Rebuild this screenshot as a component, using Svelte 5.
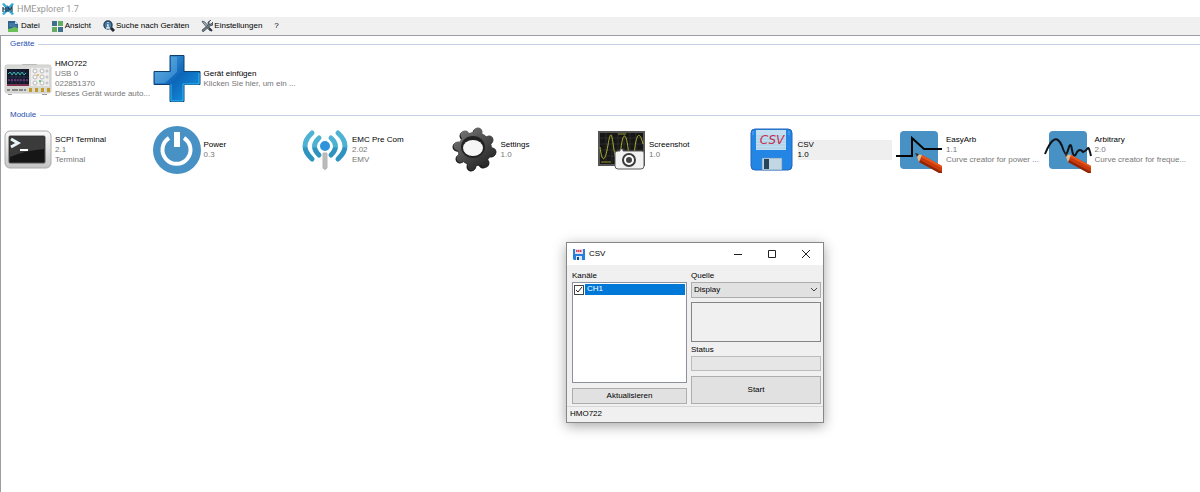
<script>
  const menu = [
    { icon: 'file', label: 'Datei' },
    { icon: 'view', label: 'Ansicht' },
    { icon: 'search', label: 'Suche nach Geräten' },
    { icon: 'tools', label: 'Einstellungen' },
    { icon: '', label: '?' }
  ]

  const groups = [
    {
      title: 'Geräte',
      items: [
        { icon: 'scope', name: 'HMO722', lines: ['USB 0', '022851370', 'Dieses Gerät wurde auto...'] },
        { icon: 'plus', name: 'Gerät einfügen', lines: ['Klicken Sie hier, um ein ...'] }
      ]
    },
    {
      title: 'Module',
      items: [
        { icon: 'terminal', name: 'SCPI Terminal', lines: ['2.1', 'Terminal'] },
        { icon: 'power', name: 'Power', lines: ['0.3'] },
        { icon: 'antenna', name: 'EMC Pre Com', lines: ['2.02', 'EMV'] },
        { icon: 'gear', name: 'Settings', lines: ['1.0'] },
        { icon: 'screenshot', name: 'Screenshot', lines: ['1.0'] },
        { icon: 'csv', name: 'CSV', lines: ['1.0'] },
        { icon: 'easyarb', name: 'EasyArb', lines: ['1.1', 'Curve creator for power ...'] },
        { icon: 'arbitrary', name: 'Arbitrary', lines: ['2.0', 'Curve creator for freque...'] }
      ]
    }
  ]

  let selected = $state('CSV')
  let open = $state(true)
  let ch1 = $state(true)
  let source = $state('Display')

  function select(name) {
    selected = name
    if (name === 'CSV') open = true
  }
</script>

{#snippet pencil()}
  <path d="M27 29l20 11v7l-2 0-21-11z" fill="#c93a0c" />
  <path d="M25 34l22 12v1l-3 0-20-11z" fill="#8f2606" />
  <path d="M27 29l20 11v2L26 31z" fill="#e8561c" />
  <path d="M21 28l6 1-3 7z" fill="#e8b88a" />
  <path d="M20 27l4 1-2 3z" fill="#333" />
{/snippet}

{#snippet picture(icon)}
  <svg class="picture" viewBox="0 0 48 48" aria-hidden="true">
    {#if icon === 'scope'}
      <rect x="18" y="9" width="15" height="3" rx="1" fill="#aaa" />
      <path d="M4 39h4v1H4zM38 39h5v1h-5z" fill="#999" />
      <rect x="1" y="10" width="46" height="28" rx="2" fill="#d8d8d4" stroke="#ccc" />
      <rect x="3" y="14" width="22" height="17" fill="#13182c" />
      <path d="M4 18h20M4 22h20M4 26h20M8 15v15M12 15v15M16 15v15M20 15v15" stroke="#37415c" stroke-width=".5" />
      <path d="M4 19l2-2 2 3 2-3 2 3 2-3 2 3 2-3 2 3 2-2" fill="none" stroke="#3ab4ae" />
      <path d="M4 25h20" stroke="#b04a9c" stroke-dasharray="2 1" />
      <path d="M3 29h22v2H3z" fill="#7d324c" />
      <path d="M27 13h18v18H27z" fill="#eee" />
      <g fill="#fafafa" stroke="#aaa" stroke-width=".8">
        <circle cx="31" cy="16" r="2" /><circle cx="38" cy="16" r="2" /><circle cx="43" cy="16" r="1" />
        <circle cx="31" cy="22" r="2" /><circle cx="38" cy="22" r="2" /><circle cx="43" cy="22" r="1" />
        <circle cx="31" cy="28" r="2" /><circle cx="38" cy="28" r="2" /><circle cx="43" cy="28" r="1" />
      </g>
      <circle cx="34" cy="20" r="1" fill="#e7ad2e" /><circle cx="36" cy="26" r="1" fill="#4bc06a" />
      <path d="M3 35h3M8 35h6M15 35h4M20 35h2" stroke="#888" stroke-width="2" />
      <path d="M25 35h3M31 35h3M37 35h3M43 35h3" stroke="#c29a28" stroke-width="4" />
    {:else if icon === 'plus'}
      <path d="M17 0.500h14v16h16v13H31v17H17v-17H1v-13h16z" fill="url(#plusFill)" stroke="#0d3f70" />
      <path d="M18 29v17h12V29h16V18" fill="none" stroke="#33b8f5" />
      <path d="M18 2h6v15L12 28H2V17h16z" fill="#7ac5f4" opacity=".35" />
    {:else if icon === 'terminal'}
      <rect x="1" y="5" width="46" height="37" rx="5" fill="url(#metal)" stroke="#aaa" />
      <rect x="5" y="10" width="36" height="27" rx="1" fill="#161616" stroke="#555" />
      <path d="M6 11h34v12q-17 1-34 8z" fill="#555" opacity=".6" />
      <path d="M7 13l7 4-7 4" fill="none" stroke="#e8f4f8" stroke-width="3" />
      <path d="M16 24h8" stroke="#fff" stroke-width="2" />
    {:else if icon === 'power'}
      <circle cx="24" cy="24" r="24" fill="#4791c5" />
      <path d="M16 12a14 14 0 1 0 15 0" fill="none" stroke="#fff" stroke-width="4" />
      <path d="M21 6h6v15h-6z" fill="#fff" />
    {:else if icon === 'antenna'}
      <path d="M22 27h4v15q-2 3-4 0z" fill="#bbb" stroke="#b5b5b5" />
      <circle cx="24" cy="20" r="5" fill="#2d94dc" />
      <g fill="none" stroke="url(#wave)" stroke-width="5" stroke-linecap="round">
        <path d="M18 12q-9 8 0 17" /><path d="M30 12q9 8 0 17" />
        <path d="M11 7q-14 13 0 26" /><path d="M37 7q14 13 0 26" />
      </g>
    {:else if icon === 'gear'}
      <g fill="#1c1c1c" stroke="#1c1c1c">
        <circle cx="24" cy="24" r="16" stroke="none" />
        <path d="M7 21l34 6M14 10l19 28M27 7l-6 34M38 15L10 33" stroke-width="9" stroke-linecap="round" />
      </g>
      <circle cx="25" cy="23" r="17" fill="url(#gearFill)" />
      <path d="M8 20l34 6M15 9l20 28M28 6l-6 34M39 14L11 32" fill="none" stroke="url(#gearFill)" stroke-width="9" stroke-linecap="round" />
      <ellipse cx="23" cy="21" rx="12" ry="11" fill="#222" />
      <ellipse cx="23" cy="22" rx="10" ry="8" fill="#f6f6f6" />
    {:else if icon === 'screenshot'}
      <rect x="1" y="6" width="45" height="33" fill="#161616" stroke="#555" stroke-width="2" />
      <path d="M2 12h43M2 18h43M2 24h43M2 30h43M8 7v30M14 7v30M20 7v30M26 7v30M32 7v30M38 7v30" stroke="#393939" stroke-width=".6" />
      <path d="M2 21c2 16 5 16 8-2s4-9 6 5 5 14 7-2 5-16 7 0 5 14 7-1 5-15 8-3" fill="none" stroke="#aaad31" />
      <path d="M3 36h10M20 8h8" stroke="#93922a" />
      <path d="M22 25v-2h3v2h19q2 0 2 2v13q0 3-3 3H20q-3 0-3-3V27q0-2 3-2z" fill="#f2f2f2" stroke="#5b5b5b" />
      <circle cx="31" cy="34" r="6" fill="#fff" stroke="#3c3c3c" stroke-width="2" />
      <circle cx="31" cy="34" r="3" fill="#444" />
    {:else if icon === 'csv'}
      <rect x="4" y="3" width="41" height="41" rx="4" fill="#2486e4" stroke="#2264bc" />
      <rect x="9" y="4" width="30" height="20" fill="#c1dff0" />
      <path d="M9 10h30M9 13h30M9 16h30M9 19h30M9 22h30" stroke="#9cc6e1" stroke-width=".7" />
      <path d="M6 5v4M42 5v4" stroke="#58aaf5" />
      <text class="csv-mark" x="25" y="18" text-anchor="middle">CSV</text>
      <path d="M15 32h20v12H15z" fill="#c3d6e4" stroke="#5c8eb8" stroke-width=".6" />
      <path d="M17 33h5v10h-5z" fill="#27465e" />
    {:else if icon === 'easyarb'}
      <rect x="5" y="5" width="38" height="38" rx="4" fill="#4791c5" />
      <path d="M1 30h16V12l12 11h18" fill="none" stroke="#050505" stroke-width="2" />
      {@render pencil()}
    {:else if icon === 'arbitrary'}
      <rect x="5" y="5" width="38" height="38" rx="4" fill="#4791c5" />
      <path d="M1 28C7 13 13 8 18 20c4 12 5 8 7 1q2-5 3 3 2 10 5 2 3-4 6 0 3-1 5-4 1-1 3 8" fill="none" stroke="#101418" stroke-width="2" />
      {@render pencil()}
    {/if}
  </svg>
{/snippet}

{#snippet smallIcon(icon)}
  <svg class="small-icon" viewBox="0 0 12 12" aria-hidden="true">
    {#if icon === 'app'}
      <path d="M2 0l4 4 4-4 2 1-4 5 4 5-2 1-4-4-4 4-2-1 4-5-4-5z" fill="#39a9d6" />
      <path d="M1 4v5M4 4v5M1 6h3M6 9V4l2 3 2-3v5" fill="none" stroke="#203b55" stroke-width="1.2" />
    {:else if icon === 'file'}
      <path d="M0 1h7l3 3v8H0z" fill="#2e638e" />
      <path d="M7 1l3 3H7z" fill="#bfdcee" />
      <path d="M1 4h6M1 6h8" stroke="#5b90b8" />
      <path d="M0 9l4-1 2-1 4 1v4H0z" fill="#6cc05b" />
    {:else if icon === 'view'}
      <path d="M0 1h5v5H0zM6 7h5v5H6z" fill="#3f708e" />
      <path d="M6 1h5v5H6zM0 7h5v5H0z" fill="#62ad62" />
    {:else if icon === 'search'}
      <path d="M8 8l3 3" stroke="#222c38" stroke-width="3" />
      <circle cx="5" cy="5" r="4" fill="#4b7ca2" stroke="#27435d" stroke-width="1.5" />
      <path d="M5 2v1M4 5h1v3M3 8h4" stroke="#dbe9f2" stroke-width="1.4" fill="none" />
    {:else if icon === 'tools'}
      <path d="M1 1l3 1 6 8-1 1-7-8z" fill="#a5b1b8" stroke="#39434a" stroke-width=".7" />
      <path d="M10 0L8 2v2h2l2-2v3L9 6l-7 6-1-2 6-5V2z" fill="#6b7a84" stroke="#303a42" stroke-width=".6" />
      <path d="M8 8l3 3" stroke="#303a42" stroke-width="2" />
    {:else if icon === 'disk'}
      <path d="M0 1h12v11H1l-1-1z" fill="#2780dd" />
      <path d="M2 1h8v5H2z" fill="#f5dce1" />
      <path d="M3 3h6" stroke="#d6435f" stroke-width="2" stroke-dasharray="1.5 .5" />
      <path d="M3 8h6v4H3z" fill="#d9e9f5" />
      <path d="M4 9h2v3H4z" fill="#174a7c" />
    {/if}
  </svg>
{/snippet}

<svg class="defs" width="0" height="0" aria-hidden="true">
  <defs>
    <linearGradient id="plusFill" x1="0" y1="0" x2="1" y2="1">
      <stop offset="0" stop-color="#55a5df" />
      <stop offset=".5" stop-color="#0c66b8" />
      <stop offset="1" stop-color="#169be8" />
    </linearGradient>
    <linearGradient id="metal" x1="0" y1="0" x2="0" y2="1">
      <stop offset="0" stop-color="#fafafa" />
      <stop offset="1" stop-color="#c4c4c4" />
    </linearGradient>
    <linearGradient id="wave" x1="0" y1="0" x2="0" y2="1">
      <stop offset=".5" stop-color="#4eb2d2" />
      <stop offset=".6" stop-color="#2e93bf" />
    </linearGradient>
    <linearGradient id="gearFill" gradientUnits="userSpaceOnUse" x1="10" y1="4" x2="38" y2="42">
      <stop offset="0" stop-color="#747474" />
      <stop offset="1" stop-color="#222" />
    </linearGradient>
  </defs>
</svg>

<div class="app">
  <header class="titlebar">
    {@render smallIcon('app')}
    <h1>HMExplorer 1.7</h1>
  </header>

  <nav class="menubar">
    {#each menu as entry}
      <button>
        {#if entry.icon}{@render smallIcon(entry.icon)}{/if}
        {entry.label}
      </button>
    {/each}
  </nav>

  <main>
    {#each groups as group}
      <section>
        <h2>{group.title}</h2>
        <div class="items">
          {#each group.items as item}
            <button class="item" class:selected={selected === item.name} onclick={() => select(item.name)}>
              {@render picture(item.icon)}
              <span class="text">
                <span class="name">{item.name}</span>
                {#each item.lines as line}
                  <span class="line">{line}</span>
                {/each}
              </span>
            </button>
          {/each}
        </div>
      </section>
    {/each}
  </main>
</div>

{#if open}
  <div class="dialog" role="dialog" aria-labelledby="dialog-title">
    <header class="dialog-title">
      {@render smallIcon('disk')}
      <h2 id="dialog-title">CSV</h2>
      <button aria-label="Minimieren">
        <svg viewBox="0 0 10 10"><path d="M1 5.5h8" /></svg>
      </button>
      <button aria-label="Maximieren">
        <svg viewBox="0 0 10 10"><path d="M1.5 1.5h7v7h-7z" /></svg>
      </button>
      <button aria-label="Schließen" onclick={() => (open = false)}>
        <svg viewBox="0 0 10 10"><path d="M1 1l8 8M9 1l-8 8" /></svg>
      </button>
    </header>

    <div class="dialog-body">
      <div class="channels">
        <span class="caption" id="channels">Kanäle</span>
        <div class="listbox" role="group" aria-labelledby="channels">
          <label><input type="checkbox" bind:checked={ch1} /><span>CH1</span></label>
        </div>
        <button class="push">Aktualisieren</button>
      </div>
      <div class="source">
        <label class="caption" for="source">Quelle</label>
        <select id="source" bind:value={source}>
          <option>Display</option>
        </select>
        <div class="preview"></div>
        <span class="caption">Status</span>
        <div class="progress" role="progressbar" aria-label="Status" aria-valuenow="0"></div>
        <button class="push start">Start</button>
      </div>
    </div>
    <footer>HMO722</footer>
  </div>
{/if}

<style>
  :global(body) {
    margin: 0;
    background: #fff;
  }
  .app,
  .dialog {
    font: 8px/10px "Liberation Sans", Arial, sans-serif;
    color: #000;
  }
  .app {
    min-height: 100vh;
    display: flex;
    flex-direction: column;
  }
  .defs {
    position: absolute;
  }
  button {
    font: inherit;
    color: inherit;
    margin: 0;
    padding: 0;
    border: 0;
    background: none;
  }
  h1,
  h2 {
    margin: 0;
    font: inherit;
  }
  .small-icon {
    width: 12px;
    height: 12px;
    flex: none;
  }

  .titlebar {
    height: 17px;
    padding-left: 2px;
    display: flex;
    align-items: center;
    gap: 3px;
  }
  .titlebar h1 {
    font: 9px/12px Roboto, sans-serif;
    color: #999;
  }
  .menubar {
    height: 18px;
    padding-left: 8px;
    display: flex;
    align-items: center;
    gap: 12px;
    background: #f0f0f0;
  }
  .menubar button {
    display: flex;
    align-items: center;
    gap: 1px;
  }

  main {
    flex: 1;
    border-top: 1px solid #9a9da5;
    border-left: 1px solid #9a9da5;
  }
  section {
    height: 71px;
  }
  section h2 {
    display: flex;
    align-items: center;
    gap: 4px;
    padding: 3px 0 5px 9px;
    color: #1e4fad;
  }
  section h2::after {
    content: "";
    flex: 1;
    height: 1px;
    background: #c5d3e6;
  }
  .items {
    display: grid;
    grid-template-columns: repeat(auto-fill, minmax(144px, 1fr));
    padding: 1px 8px 0 3px;
  }
  .item {
    display: flex;
    align-items: center;
    gap: 3px;
    text-align: left;
    min-width: 0;
  }
  .picture {
    width: 48px;
    height: 48px;
    flex: none;
  }
  .csv-mark {
    font: italic 12px "DejaVu Sans", sans-serif;
    fill: #c92b4b;
  }
  .text {
    flex: 1;
    min-width: 0;
    margin-right: 3px;
    white-space: nowrap;
  }
  .text span {
    display: block;
  }
  .line {
    color: #777;
  }
  .selected .text {
    background: #efefef;
  }
  .selected .line {
    color: #000;
  }

  .dialog {
    position: absolute;
    left: 566px;
    top: 242px;
    width: 256px;
    border: 1px solid #85878a;
    background: #f0f0f0;
    box-shadow: 0 3px 12px rgba(0, 0, 0, 0.35);
  }
  .dialog-title {
    height: 22px;
    padding-left: 6px;
    display: flex;
    align-items: center;
    background: #fff;
  }
  .dialog-title h2 {
    flex: 1;
    margin-left: 4px;
  }
  .dialog-title button {
    width: 34px;
    height: 22px;
    display: flex;
    align-items: center;
    justify-content: center;
  }
  .dialog-title button svg {
    width: 10px;
    height: 10px;
    fill: none;
    stroke: #222;
  }
  .dialog-body {
    display: grid;
    grid-template-columns: 115px 1fr;
    gap: 4px;
    padding: 6px 2px 2px 5px;
  }
  .channels,
  .source {
    display: flex;
    flex-direction: column;
  }
  .caption {
    height: 11px;
  }
  .listbox {
    flex: 1;
    padding: 1px;
    margin-bottom: 5px;
    border: 1px solid #8c919b;
    background: #fff;
  }
  .listbox label {
    display: flex;
    align-items: center;
    gap: 1px;
  }
  .listbox span {
    flex: 1;
    padding: 0 2px 1px;
    background: #0078d7;
    color: #fff;
  }
  input {
    appearance: none;
    width: 10px;
    height: 10px;
    margin: 0;
    border: 1px solid #444;
    background: #fff;
  }
  input:checked {
    background: #fff url("data:image/svg+xml,%3Csvg xmlns='http://www.w3.org/2000/svg' viewBox='0 0 8 8'%3E%3Cpath d='M1 4l2 2 4-5' fill='none' stroke='%23222'/%3E%3C/svg%3E");
  }
  .push {
    height: 16px;
    border: 1px solid #adadad;
    background: #e1e1e1;
  }
  .start {
    height: 28px;
  }
  select {
    appearance: none;
    height: 16px;
    margin: 0 0 4px;
    padding: 0 2px;
    border: 1px solid #adadad;
    border-radius: 0;
    font: inherit;
    color: inherit;
    background: #e1e1e1 url("data:image/svg+xml,%3Csvg xmlns='http://www.w3.org/2000/svg' viewBox='0 0 8 8'%3E%3Cpath d='M1 2l3 3 3-3' fill='none' stroke='%23444'/%3E%3C/svg%3E") no-repeat right 2px center / 8px 8px;
  }
  .preview {
    height: 38px;
    border: 1px solid #858585;
    margin-bottom: 3px;
  }
  .progress {
    height: 13px;
    border: 1px solid #bcbcbc;
    background: #e6e6e6;
    margin-bottom: 5px;
  }
  footer {
    padding: 2px 3px 3px;
    border-top: 1px solid #d7d7d7;
  }
</style>
